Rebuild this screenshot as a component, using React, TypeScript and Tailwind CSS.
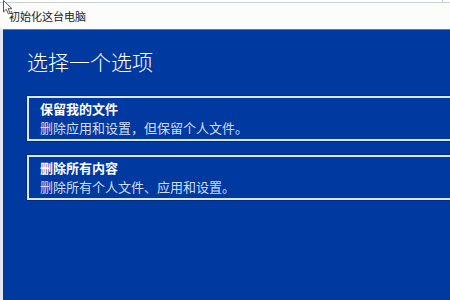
import React from "react";

export default function App() {
  const font = { fontFamily: '"Microsoft YaHei", "Noto Sans CJK SC", sans-serif' };
  return (
    <div className="relative w-[450px] h-[300px] overflow-hidden bg-white flex flex-col" style={font}>
      <div className="h-[3px] bg-white border-b border-[#c9ced3] flex justify-end">
        <div className="w-[8px] border-l border-[#c9ced3]"></div>
      </div>
      <div className="h-[26px] bg-[#fcfcfa] flex items-center pl-[9px] text-[11px] text-[#222] leading-none">
        初始化这台电脑
      </div>
      <div className="flex-1 flex">
        <div className="w-[3px] bg-[#e3e6ec]"></div>
        <div className="flex-1 bg-[#0039a0] border-t border-[#4f7cc9] flex flex-col pl-[24px] pt-[18px]">
          <div className="text-white text-[21px] leading-[26px] tracking-[0px] font-light">选择一个选项</div>
          <div className="mt-[22px] mr-[-20px] h-[45px] border-2 border-[#dbe6f8] shadow-[0_0_0_1px_#002a7a] flex flex-col justify-center gap-[1px] pl-[11px]">
            <div className="text-white text-[13px] leading-[18px] font-bold">保留我的文件</div>
            <div className="text-[#d3def2] text-[13px] leading-[18px]">删除应用和设置，但保留个人文件。</div>
          </div>
          <div className="mt-[14px] mr-[-20px] h-[45px] border-2 border-[#dbe6f8] shadow-[0_0_0_1px_#002a7a] flex flex-col justify-center gap-[1px] pl-[11px]">
            <div className="text-white text-[13px] leading-[18px] font-bold">删除所有内容</div>
            <div className="text-[#d3def2] text-[13px] leading-[18px]">删除所有个人文件、应用和设置。</div>
          </div>
        </div>
      </div>
      <svg className="absolute left-[3px] top-0" width="11" height="15" viewBox="0 0 11 15">
        <path d="M0.5 0.5 L0.5 12 L3.3 9.3 L5.3 13.8 L7 13 L5.1 8.7 L9 8.7 Z" fill="#fff" stroke="#555" strokeWidth="1" />
      </svg>
    </div>
  );
}
